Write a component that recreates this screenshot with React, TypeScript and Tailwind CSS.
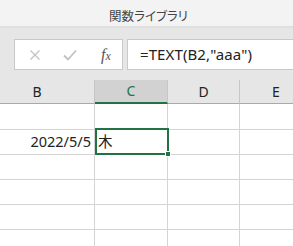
import React from "react";

const UI_FONT = "font-['Noto_Sans','Noto_Sans_CJK_JP',sans-serif]";

// 列幅: B は左側が画面外にはみ出している
const COLS = [
  { key: "B", width: "w-[95px]", pad: "pr-[20px]" },
  { key: "C", width: "w-[73px]", pad: "" },
  { key: "D", width: "w-[72px]", pad: "" },
  { key: "E", width: "w-[73px]", pad: "" },
];

const ROWS = ["", "2022/5/5", "", "", "", "", ""];

function FormulaBar() {
  return (
    <div className="h-[51px] bg-[#e6e6e6] pt-[10px] pl-[14px] flex gap-[4px]">
      <div className="w-[109px] h-[31px] shrink-0 bg-white border border-[#c9c9c9] flex items-center">
        {/* cancel */}
        <svg className="ml-[14px]" width="12" height="12" viewBox="0 0 12 12">
          <path d="M1.5 1.5 L10.5 10.5 M10.5 1.5 L1.5 10.5" stroke="#c2c2c2" strokeWidth="1.3" fill="none" />
        </svg>
        {/* enter */}
        <svg className="ml-[22px]" width="14" height="12" viewBox="0 0 14 12">
          <path d="M1 6.5 L5 10.5 L13 1.5" stroke="#c2c2c2" strokeWidth="1.8" fill="none" />
        </svg>
        <span className="ml-[24px] font-['Liberation_Serif',serif] italic text-[16px] text-[#555] leading-none">
          f<span className="text-[12px]">x</span>
        </span>
      </div>
      <div className="w-[200px] h-[31px] shrink-0 bg-white border border-[#c9c9c9] flex items-center pl-[12px]">
        <span className={`${UI_FONT} text-[15px] text-[#222] tracking-[0.1px]`}>=TEXT(B2,"aaa")</span>
      </div>
    </div>
  );
}

function HeaderRow() {
  return (
    <div className="h-[24px] flex bg-[#e6e6e6]">
      {COLS.map((c) => {
        const selected = c.key === "C";
        return (
          <div
            key={c.key}
            className={`${c.width} shrink-0 h-full flex items-center justify-center ${c.pad} border-r border-[#c6c6c6] ${
              selected
                ? "bg-[#d2d2d2] text-[#217346] border-b-2 border-b-[#217346]"
                : "text-[#222] border-b border-b-[#a9a9a9]"
            }`}
          >
            <span className={`${UI_FONT} text-[14px] leading-none`}>{c.key}</span>
          </div>
        );
      })}
    </div>
  );
}

export default function App() {
  return (
    <div className="w-[293px] h-[246px] overflow-hidden bg-white relative">
      <div className="h-[26px] bg-[#f3f3f3] flex justify-center items-end">
        <span className={`${UI_FONT} text-[12.5px] text-[#444] leading-none pb-[3px] ml-[4px] [font-feature-settings:'palt']`}>
          関数ライブラリ
        </span>
      </div>
      <div className="h-[3px] bg-gradient-to-b from-[#dcdcdc] to-[#e6e6e6]" />
      <FormulaBar />
      <HeaderRow />
      <div>
        {ROWS.map((v, i) => (
          <div key={i} className={`flex ${i === 0 ? "h-[26px]" : "h-[25px]"}`}>
            {COLS.map((c, j) => (
              <div
                key={c.key}
                className={`${c.width} shrink-0 h-full border-r border-b border-[#d4d4d4] flex items-center ${
                  j === 0 ? "justify-end pr-[3px]" : "pl-[3px]"
                }`}
              >
                <span className={`${UI_FONT} text-[14.5px] text-[#222]`}>
                  {j === 0 ? v : i === 1 && j === 1 ? "木" : ""}
                </span>
              </div>
            ))}
          </div>
        ))}
      </div>
      {/* 選択セル C2 */}
      <div className="absolute left-[95px] top-[128px] w-[74px] h-[27px] border-2 border-[#217346]" />
      <div className="absolute left-[165px] top-[151px] w-[6px] h-[6px] bg-[#217346] border border-white" />
    </div>
  );
}
